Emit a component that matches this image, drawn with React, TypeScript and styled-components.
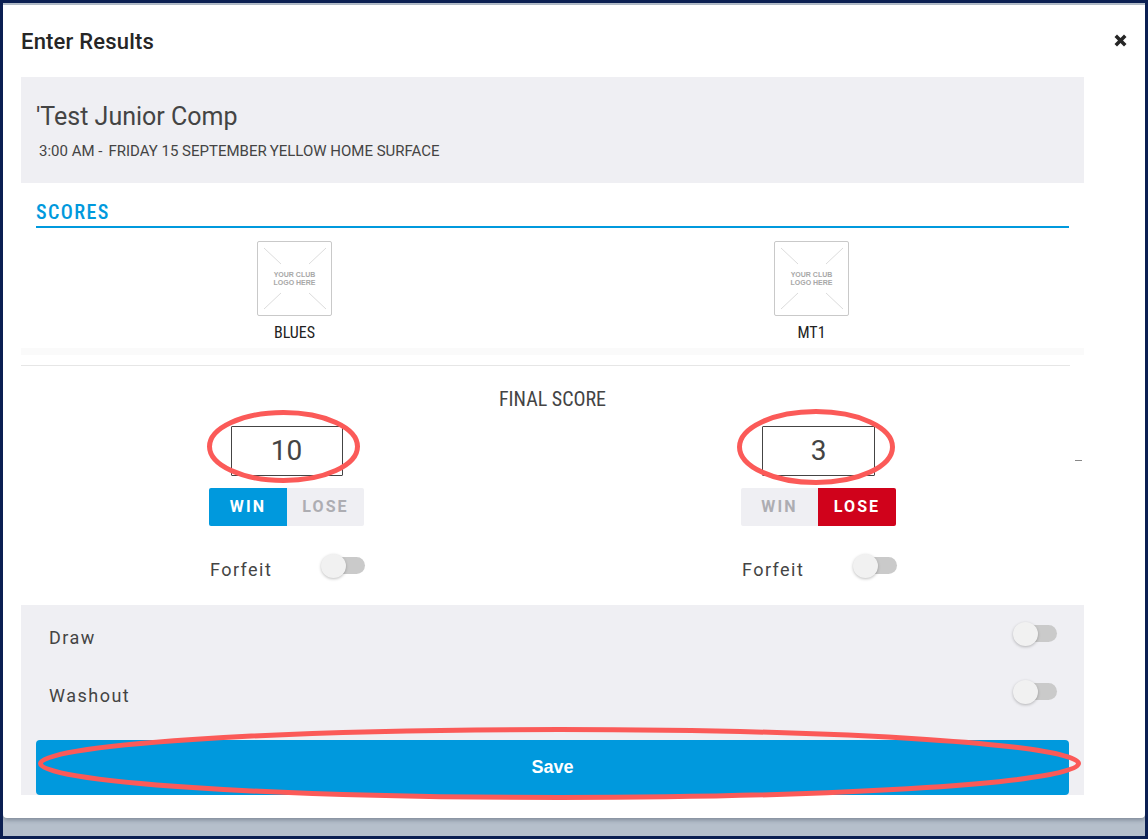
import React from "react";
import styled, { createGlobalStyle } from "styled-components";

const GlobalStyle = createGlobalStyle`
  html, body {
    margin: 0;
    padding: 0;
    background: #0b1f52;
    font-family: Roboto, "Liberation Sans", sans-serif;
  }
  * { box-sizing: border-box; }
`;

const teams = [
  { name: "BLUES", score: "10", result: "win", boxWidth: 112, ring: { left: -25, top: -17, width: 153, height: 73 } },
  { name: "MT1", score: "3", result: "lose", boxWidth: 113, ring: { left: -26, top: -18, width: 158, height: 76 } },
];

function RingMark({ width, height }: { width: number; height: number }) {
  return (
    <svg width={width} height={height} viewBox={`0 0 ${width} ${height}`} fill="none">
      <ellipse
        cx={width / 2}
        cy={height / 2}
        rx={width / 2 - 2.5}
        ry={height / 2 - 2.5}
        stroke="#fb5a58"
        strokeWidth="5"
      />
    </svg>
  );
}

function ClubLogo() {
  return (
    <LogoBox>
      <svg width="73" height="73" viewBox="0 0 73 73" fill="none" stroke="#dcdcdc" strokeWidth="1">
        <path d="M6 6 L23 22" />
        <path d="M68 6 L51 22" />
        <path d="M6 67 L23 51" />
        <path d="M68 67 L51 51" />
      </svg>
      <LogoText>
        YOUR CLUB
        <br />
        LOGO HERE
      </LogoText>
    </LogoBox>
  );
}

function App() {
  return (
    <>
      <GlobalStyle />
      <Frame>
        <Modal>
          <Header>
            <Title>Enter Results</Title>
            <CloseIcon width="13" height="13" viewBox="0 0 13 13">
              <path d="M3 .5 L6.5 4 L10 .5 L12.5 3 L9 6.5 L12.5 10 L10 12.5 L6.5 9 L3 12.5 L.5 10 L4 6.5 L.5 3 Z" fill="#262626" />
            </CloseIcon>
          </Header>

          <Body>
            <MatchPanel>
              <CompName>'Test Junior Comp</CompName>
              <MatchMeta>
                <span>3:00 AM -</span>
                <span>FRIDAY 15 SEPTEMBER</span>
                <span>YELLOW HOME SURFACE</span>
              </MatchMeta>
            </MatchPanel>

            <ScoresSection>
              <SectionTitle>SCORES</SectionTitle>
              <LogoRow>
                {teams.map((team) => (
                  <TeamBlock key={team.name}>
                    <ClubLogo />
                    <TeamName>{team.name}</TeamName>
                  </TeamBlock>
                ))}
              </LogoRow>
            </ScoresSection>

            <FaintBand />
            <Divider />

            <FinalScore>
              <FinalTitle>FINAL SCORE</FinalTitle>
              <ScoreGrid>
                {teams.map((team) => (
                  <ScoreColumn key={team.name}>
                    <ScoreBox $width={team.boxWidth}>
                      {team.score}
                      <Ring style={team.ring}>
                        <RingMark width={team.ring.width} height={team.ring.height} />
                      </Ring>
                    </ScoreBox>
                    <ResultToggle>
                      <ResultButton $active={team.result === "win"} $tone="#0099dd">
                        WIN
                      </ResultButton>
                      <ResultButton $active={team.result === "lose"} $tone="#d0021b">
                        LOSE
                      </ResultButton>
                    </ResultToggle>
                    <ForfeitRow>
                      <ForfeitLabel>Forfeit</ForfeitLabel>
                      <Switch />
                    </ForfeitRow>
                  </ScoreColumn>
                ))}
              </ScoreGrid>
              <StrayDash />
            </FinalScore>

            <OptionsPanel>
              <OptionRow>
                <OptionLabel>Draw</OptionLabel>
                <Switch />
              </OptionRow>
              <OptionRow>
                <OptionLabel>Washout</OptionLabel>
                <Switch />
              </OptionRow>
              <SaveButton>
                Save
                <SaveRing>
                  <RingMark width={1043} height={73} />
                </SaveRing>
              </SaveButton>
            </OptionsPanel>
          </Body>
        </Modal>
      </Frame>
    </>
  );
}

export default App;

const Frame = styled.div`
  width: 1148px;
  height: 839px;
  border: 3px solid #0b1f52;
  background: #b5bfcb;
  padding-top: 2px;
  overflow: hidden;
`;

const Modal = styled.div`
  height: 813px;
  background: #fff;
  border-radius: 0 0 4px 4px;
  box-shadow: 0 2px 4px rgba(60, 70, 90, 0.45);
`;

const Header = styled.div`
  height: 72px;
  padding: 0 18px 0 18px;
  display: flex;
  align-items: center;
  justify-content: space-between;
`;

const Title = styled.h1`
  margin: 0;
  font-size: 22px;
  font-weight: 500;
  letter-spacing: 0.2px;
  color: #262626;
`;

const CloseIcon = styled.svg`
  margin-top: -2px;
`;

const Body = styled.div`
  width: 1063px;
  margin-left: 18px;
`;

const MatchPanel = styled.div`
  height: 106px;
  background: #efeff3;
  padding: 25px 15px 0;
`;

const CompName = styled.div`
  font-size: 25px;
  line-height: 30px;
  color: #444;
`;

const MatchMeta = styled.div`
  display: flex;
  margin: 10px 0 0 3px;
  font-size: 15px;
  line-height: 18px;
  color: #444;

  span:first-child {
    margin-right: 6px;
  }
  span:nth-child(2) {
    margin-right: 3px;
  }
`;

const ScoresSection = styled.div`
  padding: 0 15px;
`;

const SectionTitle = styled.div`
  height: 45px;
  padding-top: 19px;
  border-bottom: 2px solid #0099dd;
  font-size: 20px;
  line-height: 21px;
  font-weight: 500;
  font-stretch: condensed;
  letter-spacing: 1.4px;
  color: #0099dd;
`;

const LogoRow = styled.div`
  display: grid;
  grid-template-columns: 517px 517px;
  padding-top: 13px;
`;

const TeamBlock = styled.div`
  display: flex;
  flex-direction: column;
  align-items: center;
`;

const LogoBox = styled.div`
  position: relative;
  width: 75px;
  height: 75px;
  border: 1px solid #c9c9c9;
  border-radius: 2px;
`;

const LogoText = styled.div`
  position: absolute;
  inset: 0;
  display: flex;
  align-items: center;
  justify-content: center;
  text-align: center;
  font-family: "Liberation Sans", sans-serif;
  font-size: 7px;
  line-height: 8px;
  font-weight: 700;
  color: #a8a8a8;
`;

const TeamName = styled.div`
  margin-top: 8px;
  height: 17px;
  font-size: 16px;
  line-height: 17px;
  font-stretch: condensed;
  color: #222;
`;

const FaintBand = styled.div`
  height: 7px;
  margin-top: 7px;
  background: #fafafa;
`;

const Divider = styled.div`
  width: 1049px;
  margin-top: 10px;
  border-top: 1px solid #e6e6e6;
`;

const FinalScore = styled.div`
  position: relative;
  height: 239px;
`;

const FinalTitle = styled.div`
  padding-top: 23px;
  height: 60px;
  text-align: center;
  font-size: 20px;
  line-height: 21px;
  font-stretch: condensed;
  color: #444;
`;

const ScoreGrid = styled.div`
  display: grid;
  grid-template-columns: 531px 533px;
`;

const ScoreColumn = styled.div`
  display: flex;
  flex-direction: column;
  align-items: center;
`;

const ScoreBox = styled.div<{ $width: number }>`
  position: relative;
  width: ${(p) => p.$width}px;
  height: 50px;
  padding-bottom: 2px;
  border: 1px solid #444;
  border-radius: 1px;
  display: flex;
  align-items: center;
  justify-content: center;
  font-size: 28px;
  color: #444;
`;

const Ring = styled.div`
  position: absolute;
  display: flex;
  pointer-events: none;
`;

const ResultToggle = styled.div`
  display: flex;
  margin-top: 12px;
  border-radius: 2px;
  overflow: hidden;
`;

const ResultButton = styled.div<{ $active: boolean; $tone: string }>`
  width: ${(p) => (p.$active ? 78 : 77)}px;
  height: 38px;
  padding-bottom: 2px;
  display: flex;
  align-items: center;
  justify-content: center;
  font-size: 16px;
  font-weight: 700;
  letter-spacing: 2.1px;
  background: ${(p) => (p.$active ? p.$tone : "#efeff3")};
  color: ${(p) => (p.$active ? "#fff" : "#adadb2")};
`;

const ForfeitRow = styled.div`
  width: 157px;
  margin-top: 28px;
  display: flex;
  align-items: flex-start;
  justify-content: space-between;
`;

const ForfeitLabel = styled.span`
  margin-left: 2px;
  margin-top: 5px;
  font-size: 18px;
  letter-spacing: 1.45px;
  color: #444;
`;

const Switch = styled.span`
  position: relative;
  display: block;
  width: 44px;
  height: 24px;

  &::before {
    content: "";
    position: absolute;
    right: 0;
    top: 3px;
    width: 36px;
    height: 17px;
    border-radius: 9px;
    background: #cacaca;
  }
  &::after {
    content: "";
    position: absolute;
    left: 0;
    top: 0;
    width: 25px;
    height: 24px;
    border-radius: 50%;
    background: #f1f1f1;
    box-shadow: 0 1px 3px rgba(0, 0, 0, 0.25);
  }
`;

const StrayDash = styled.div`
  position: absolute;
  left: 1054px;
  top: 94px;
  width: 7px;
  border-top: 1px solid #888;
`;

const OptionsPanel = styled.div`
  height: 190px;
  background: #efeff3;
  padding: 17px 27px 0 15px;
  display: flex;
  flex-direction: column;
`;

const OptionRow = styled.div`
  display: flex;
  align-items: center;
  justify-content: space-between;
  height: 24px;
  margin-bottom: 34px;
`;

const OptionLabel = styled.span`
  margin-left: 13px;
  margin-top: 7px;
  font-size: 18px;
  letter-spacing: 1.5px;
  color: #444;
`;

const SaveButton = styled.div`
  position: relative;
  width: 1033px;
  height: 55px;
  margin-top: 2px;
  border-radius: 4px;
  background: #0099dd;
  display: flex;
  align-items: center;
  justify-content: center;
  font-family: "Liberation Sans", sans-serif;
  font-size: 18px;
  font-weight: 700;
  color: #fff;
`;

const SaveRing = styled.div`
  position: absolute;
  left: 2px;
  top: -13px;
  display: flex;
  pointer-events: none;
`;
